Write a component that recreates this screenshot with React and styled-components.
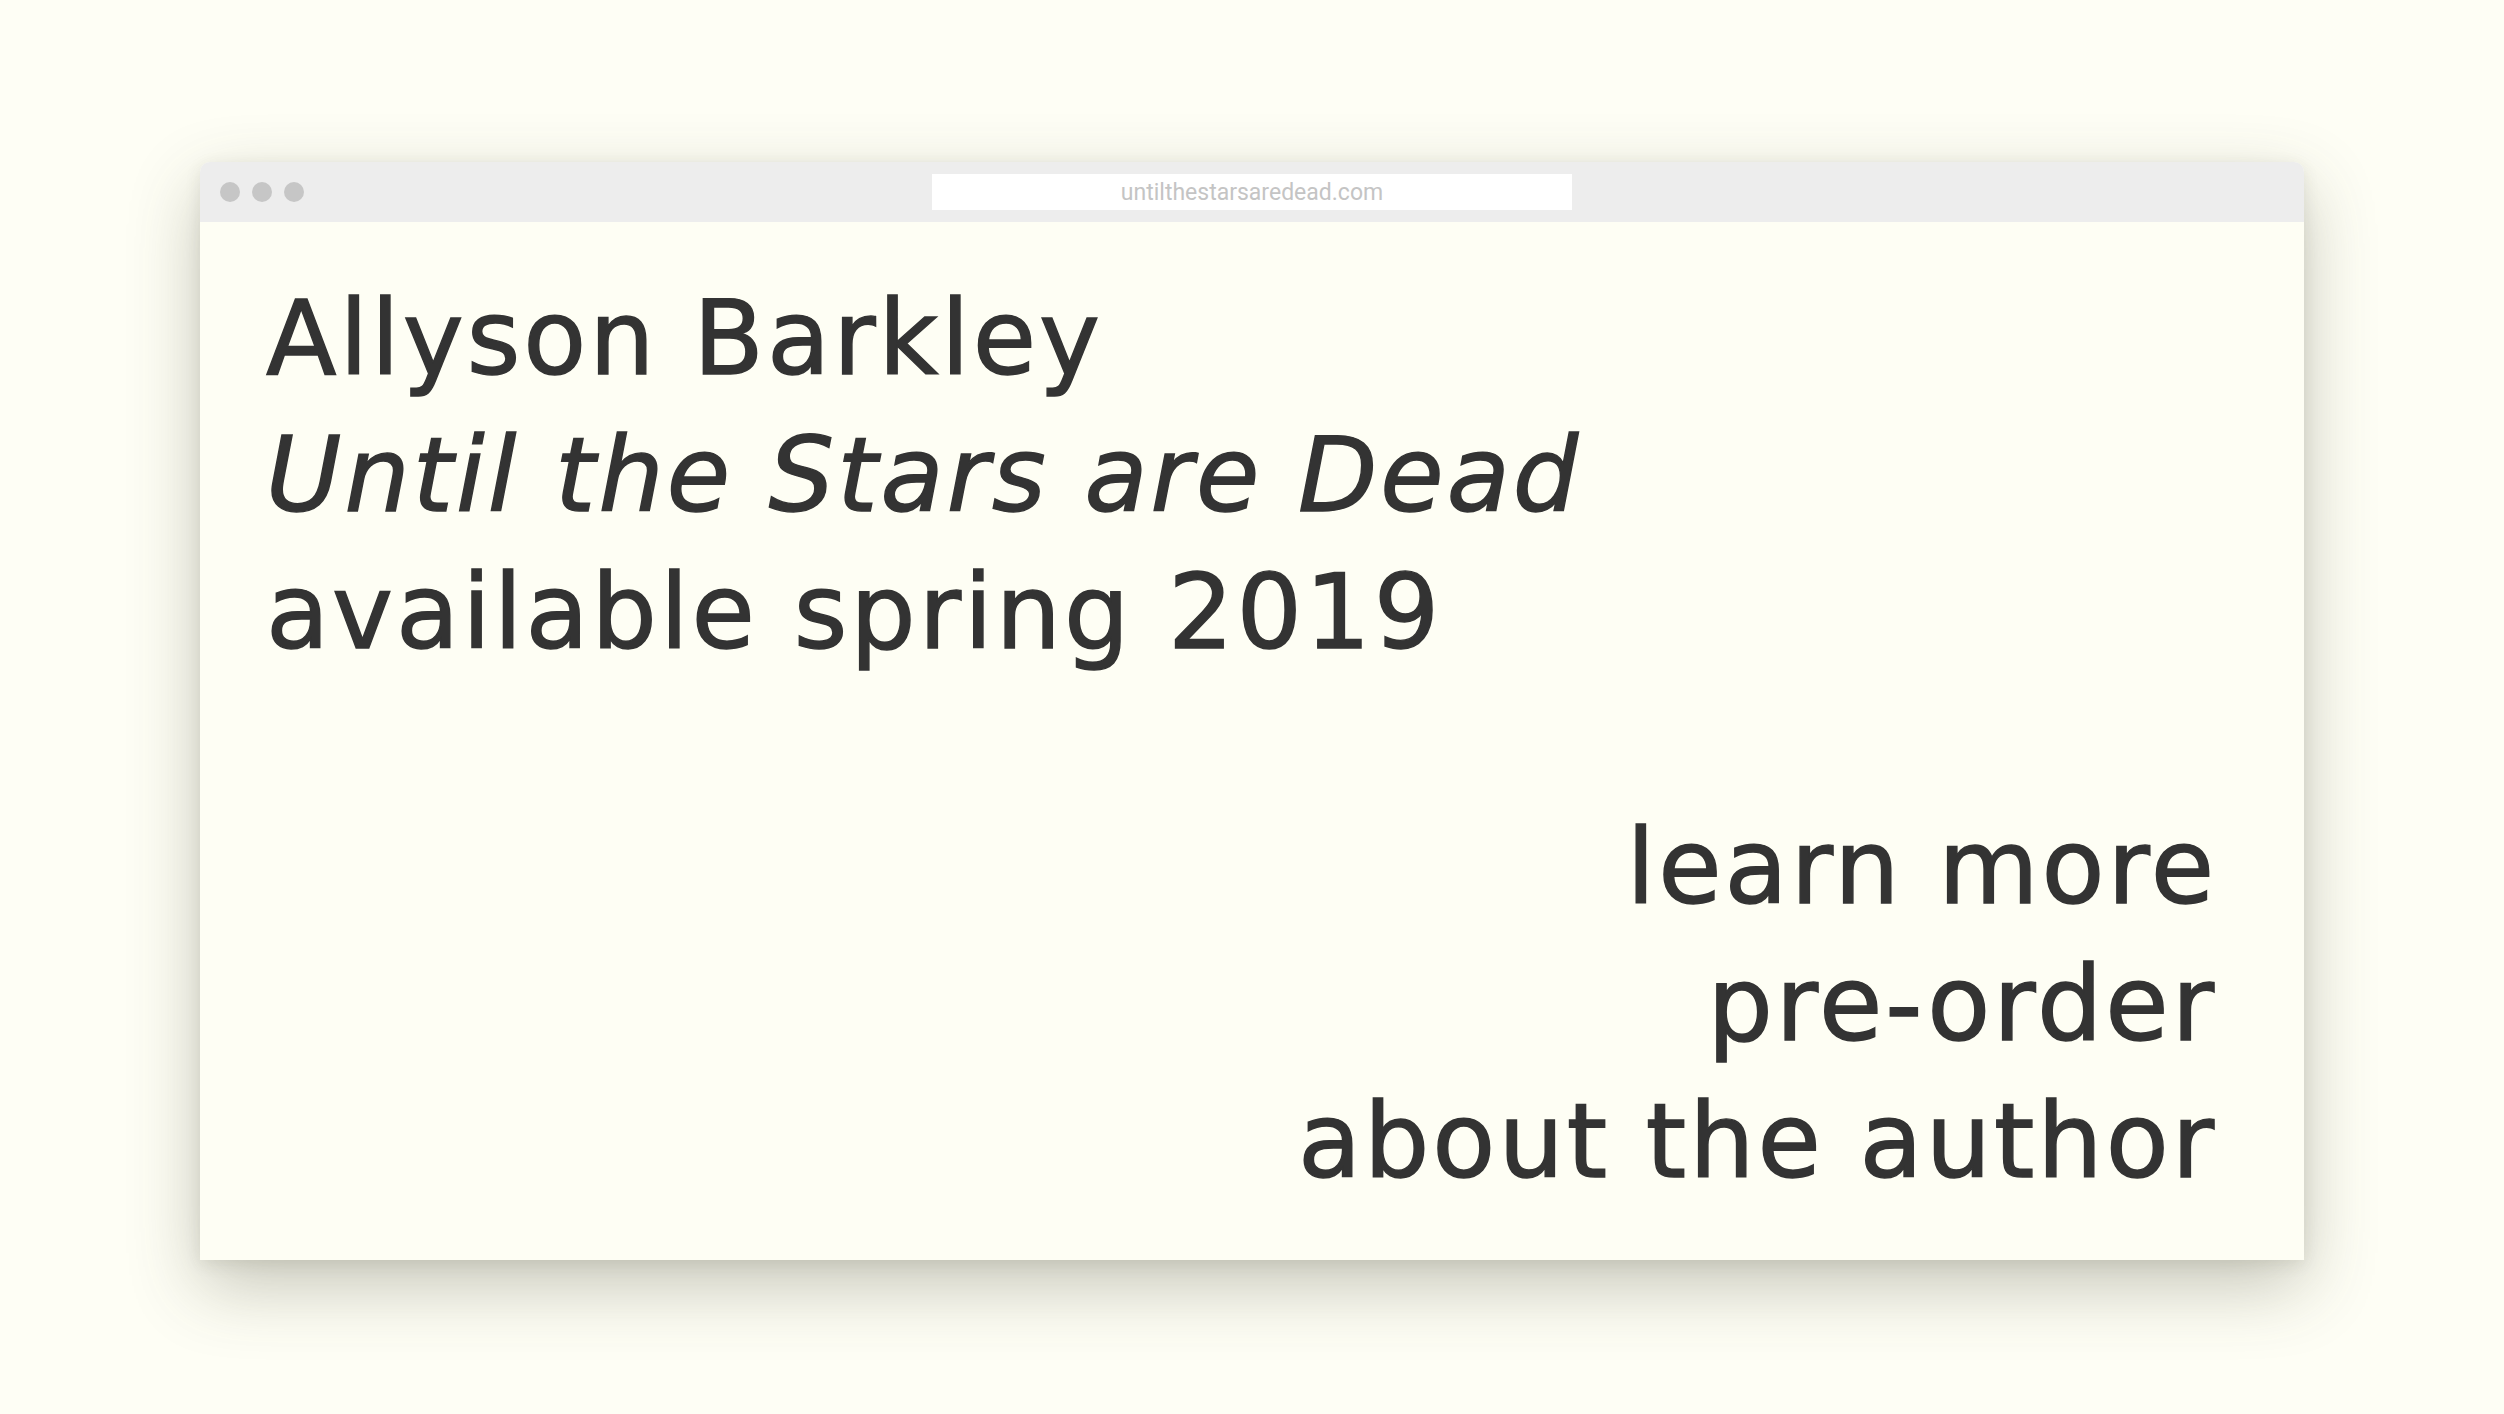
import styled, { createGlobalStyle } from "styled-components";

const GlobalStyle = createGlobalStyle`
  html, body {
    margin: 0;
    padding: 0;
    background: #fefef5;
  }
`;

const Page = styled.div`
  /* center the browser mock on the page */
  display: flex;
  align-items: center;
  justify-content: center;
  box-sizing: border-box;
  width: 100%;
  height: 100vh;
  padding-top: 8px;
  background: #fefef5;
`;

const Window = styled.div`
  display: flex;
  flex-direction: column;
  width: 2104px;
  height: 1098px;
  border-radius: 10px 10px 0 0;
  background: #fefef4;
  box-shadow: 0 26px 70px rgba(70, 70, 50, 0.3), 0 4px 16px rgba(70, 70, 50, 0.1);
`;

const TitleBar = styled.div`
  position: relative;
  display: flex;
  align-items: center;
  justify-content: center;
  height: 60px;
  flex-shrink: 0;
  background: #ededed;
  border-radius: 10px 10px 0 0;
`;

const Dots = styled.div`
  position: absolute;
  left: 20px;
  top: 20px;
  display: flex;
  gap: 12px;
`;

const Dot = styled.span`
  width: 20px;
  height: 20px;
  border-radius: 50%;
  background: #c6c6c6;
`;

const UrlBar = styled.div`
  width: 640px;
  height: 36px;
  background: #ffffff;
  display: flex;
  align-items: center;
  justify-content: center;
  font-family: Roboto, "Liberation Sans", sans-serif;
  font-size: 23px;
  color: #c4c4c4;
`;

const Body = styled.main`
  flex: 1;
  display: flex;
  flex-direction: column;
  justify-content: space-between;
  padding: 48px 87px 50px 66px;
  font-family: "DejaVu Sans", "Liberation Sans", sans-serif;
  font-size: 103px;
  line-height: 137px;
  letter-spacing: 3px;
  color: #333333;
  -webkit-text-stroke: 1.4px #333333;
`;

const Intro = styled.div`
  display: flex;
  flex-direction: column;
`;

const Line = styled.div`
  font-style: ${(p) => (p.italic ? "italic" : "normal")};
  white-space: nowrap;
`;

const Links = styled.nav`
  display: flex;
  flex-direction: column;
  align-items: flex-end;
`;

const NavLink = styled.a`
  color: inherit;
  text-decoration: none;
  white-space: nowrap;
`;

const App = () => {
  return (
    <Page>
      <GlobalStyle />
      <Window>
        <TitleBar>
          <Dots>
            <Dot />
            <Dot />
            <Dot />
          </Dots>
          <UrlBar>untilthestarsaredead.com</UrlBar>
        </TitleBar>
        <Body>
          <Intro>
            <Line>Allyson Barkley</Line>
            <Line italic>Until the Stars are Dead</Line>
            <Line>available spring 2019</Line>
          </Intro>
          <Links>
            <NavLink href="#">learn more</NavLink>
            <NavLink href="#">pre-order</NavLink>
            <NavLink href="#">about the author</NavLink>
          </Links>
        </Body>
      </Window>
    </Page>
  );
};

export default App;
